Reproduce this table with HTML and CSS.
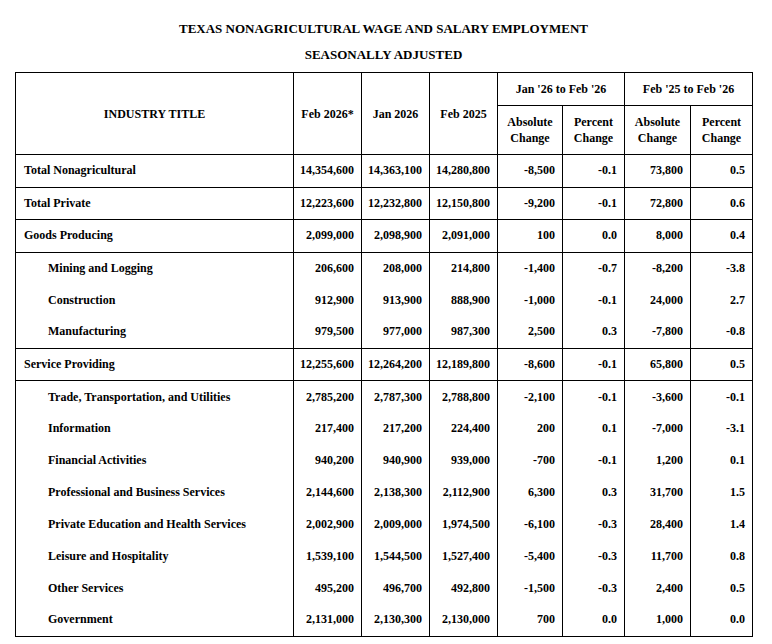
FILE: index.html
```html
<!DOCTYPE html>
<html lang="en">
<head>
<meta charset="utf-8">
<title>Texas Nonagricultural Wage and Salary Employment</title>
<link rel="stylesheet" href="styles.css">
</head>
<body>
<div class="page">
  <div class="title">
    <div>TEXAS NONAGRICULTURAL WAGE AND SALARY EMPLOYMENT</div>
    <div>SEASONALLY ADJUSTED</div>
  </div>
  <table class="emp">
    <colgroup>
      <col class="c-title"><col class="c-val"><col class="c-val"><col class="c-val">
      <col class="c-abs1"><col class="c-pct"><col class="c-abs2"><col class="c-pct">
    </colgroup>
    <thead>
      <tr class="h1">
        <th rowspan="2">INDUSTRY TITLE</th>
        <th rowspan="2">Feb 2026*</th>
        <th rowspan="2">Jan 2026</th>
        <th rowspan="2">Feb 2025</th>
        <th colspan="2">Jan '26 to Feb '26</th>
        <th colspan="2">Feb '25 to Feb '26</th>
      </tr>
      <tr class="h2">
        <th>Absolute<br>Change</th>
        <th>Percent<br>Change</th>
        <th>Absolute<br>Change</th>
        <th>Percent<br>Change</th>
      </tr>
    </thead>
    <tbody>
      <tr class="sep"><td class="lbl">Total Nonagricultural</td><td>14,354,600</td><td>14,363,100</td><td>14,280,800</td><td>-8,500</td><td>-0.1</td><td>73,800</td><td>0.5</td></tr>
      <tr class="sep"><td class="lbl">Total Private</td><td>12,223,600</td><td>12,232,800</td><td>12,150,800</td><td>-9,200</td><td>-0.1</td><td>72,800</td><td>0.6</td></tr>
      <tr class="sep"><td class="lbl">Goods Producing</td><td>2,099,000</td><td>2,098,900</td><td>2,091,000</td><td>100</td><td>0.0</td><td>8,000</td><td>0.4</td></tr>
      <tr><td class="lbl sub">Mining and Logging</td><td>206,600</td><td>208,000</td><td>214,800</td><td>-1,400</td><td>-0.7</td><td>-8,200</td><td>-3.8</td></tr>
      <tr><td class="lbl sub">Construction</td><td>912,900</td><td>913,900</td><td>888,900</td><td>-1,000</td><td>-0.1</td><td>24,000</td><td>2.7</td></tr>
      <tr class="sep"><td class="lbl sub">Manufacturing</td><td>979,500</td><td>977,000</td><td>987,300</td><td>2,500</td><td>0.3</td><td>-7,800</td><td>-0.8</td></tr>
      <tr class="sep"><td class="lbl">Service Providing</td><td>12,255,600</td><td>12,264,200</td><td>12,189,800</td><td>-8,600</td><td>-0.1</td><td>65,800</td><td>0.5</td></tr>
      <tr><td class="lbl sub">Trade, Transportation, and Utilities</td><td>2,785,200</td><td>2,787,300</td><td>2,788,800</td><td>-2,100</td><td>-0.1</td><td>-3,600</td><td>-0.1</td></tr>
      <tr><td class="lbl sub">Information</td><td>217,400</td><td>217,200</td><td>224,400</td><td>200</td><td>0.1</td><td>-7,000</td><td>-3.1</td></tr>
      <tr><td class="lbl sub">Financial Activities</td><td>940,200</td><td>940,900</td><td>939,000</td><td>-700</td><td>-0.1</td><td>1,200</td><td>0.1</td></tr>
      <tr><td class="lbl sub">Professional and Business Services</td><td>2,144,600</td><td>2,138,300</td><td>2,112,900</td><td>6,300</td><td>0.3</td><td>31,700</td><td>1.5</td></tr>
      <tr><td class="lbl sub">Private Education and Health Services</td><td>2,002,900</td><td>2,009,000</td><td>1,974,500</td><td>-6,100</td><td>-0.3</td><td>28,400</td><td>1.4</td></tr>
      <tr><td class="lbl sub">Leisure and Hospitality</td><td>1,539,100</td><td>1,544,500</td><td>1,527,400</td><td>-5,400</td><td>-0.3</td><td>11,700</td><td>0.8</td></tr>
      <tr><td class="lbl sub">Other Services</td><td>495,200</td><td>496,700</td><td>492,800</td><td>-1,500</td><td>-0.3</td><td>2,400</td><td>0.5</td></tr>
      <tr class="sep"><td class="lbl sub">Government</td><td>2,131,000</td><td>2,130,300</td><td>2,130,000</td><td>700</td><td>0.0</td><td>1,000</td><td>0.0</td></tr>
    </tbody>
  </table>
</div>
</body>
</html>
```
FILE: styles.css
```css
html, body {
  margin: 0;
  padding: 0;
  background: #fff;
}

body {
  font-family: "Liberation Serif", "Times New Roman", serif;
  color: #000;
  font-weight: bold;
}

.page {
  padding: 16px 0 0 15px;
  width: 737px;
}

.title {
  text-align: center;
  font-size: 13px;
  line-height: 26px;
}

.emp {
  margin-top: 4px;
  border-collapse: collapse;
  table-layout: fixed;
  width: 737px;
  font-size: 12px;
  border: 1px solid #000;
}

.c-title { width: 278px; }
.c-val { width: 68px; }
.c-abs1 { width: 65px; }
.c-pct { width: 62px; }
.c-abs2 { width: 66px; }

.emp th {
  font-weight: bold;
  text-align: center;
  vertical-align: middle;
  border: 1px solid #000;
  padding: 0 2px;
  line-height: 16px;
}

.emp .h1 th {
  height: 32px;
}

.emp .h2 th {
  height: 48px;
}

.emp td {
  height: 31.85px;
  padding: 0 7px 0 4px;
  text-align: right;
  vertical-align: middle;
  border-left: 1px solid #000;
  border-right: 1px solid #000;
  white-space: nowrap;
}

.emp td.lbl {
  text-align: left;
  padding-left: 8px;
}

.emp td.sub {
  padding-left: 32px;
}

.emp tr.sep td {
  height: 31.5px;
  border-bottom: 1px solid #000;
}
```
